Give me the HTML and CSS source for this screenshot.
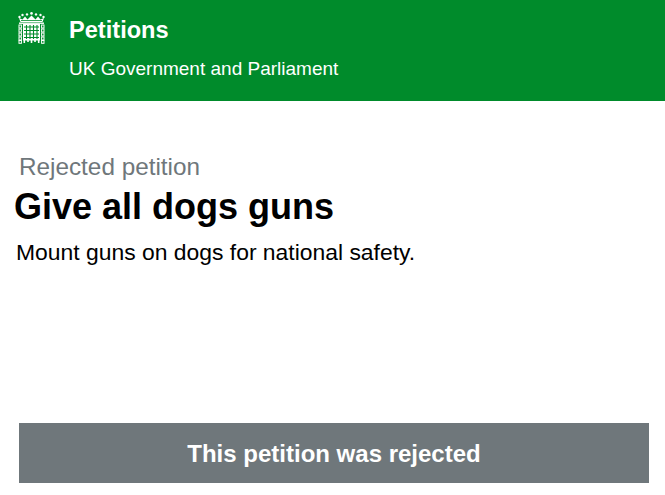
FILE: index.html
```html
<!DOCTYPE html>
<html lang="en">
<head>
<meta charset="utf-8">
<title>Rejected petition</title>
<link rel="stylesheet" href="styles.css">
</head>
<body>
<header class="site-header">
  <svg class="crest" width="27" height="32" viewBox="0 0 27 32" aria-hidden="true">
    <g fill="#fff">
      <circle cx="13.5" cy="1.4" r="1.3"/><circle cx="9" cy="2.4" r="1.2"/><circle cx="18" cy="2.4" r="1.2"/><circle cx="4.5" cy="3" r="1.2"/><circle cx="22.5" cy="3" r="1.2"/><circle cx="1.5" cy="5" r="1.2"/><circle cx="25.5" cy="5" r="1.2"/>
      <path d="M1 6l3.5 1.5L7 4.500l2.500 3 4-4 4 4 2.500-3 2.500 3L26 6l-1.500 4h-22z"/>
    </g>
    <rect x="3" y="8" width="21" height=".8" fill="#008b2b"/>
    <rect x="1" y="10.500" width="25" height="1.400" fill="#fff"/>
    <g fill="none" stroke="#fff" stroke-width="1">
      <rect x="1" y="13" width="2.400" height="3"/><rect x="1" y="17" width="2.400" height="3"/><rect x="1" y="21" width="2.400" height="3"/><rect x="1" y="25" width="2.400" height="3"/><rect x="1" y="28.500" width="2.400" height="2.800"/>
      <rect x="23.600" y="13" width="2.400" height="3"/><rect x="23.600" y="17" width="2.400" height="3"/><rect x="23.600" y="21" width="2.400" height="3"/><rect x="23.600" y="25" width="2.400" height="3"/><rect x="23.600" y="28.500" width="2.400" height="2.800"/>
    </g>
    <rect x="5" y="12" width="17" height="16.500" fill="#fff"/>
    <g fill="#fff">
      <rect x="5.500" y="28" width="1.600" height="3"/><rect x="9.200" y="28" width="1.600" height="2"/><rect x="12.700" y="28" width="1.600" height="3"/><rect x="16.200" y="28" width="1.600" height="2"/><rect x="19.900" y="28" width="1.600" height="3"/>
    </g>
    <g stroke="#008b2b" stroke-width="1.100">
      <path d="M6 15h15M6 18.500h15M6 22h15M6 25.500h15M8.500 13v14M12 13v14M15.500 13v14M19 13v14"/>
    </g>
  </svg>
  <div class="brand">
    <div class="brand-title">Petitions</div>
    <div class="brand-sub">UK Government and Parliament</div>
  </div>
</header>
<main class="content">
  <p class="status">Rejected petition</p>
  <h1 class="title">Give all dogs guns</h1>
  <p class="summary">Mount guns on dogs for national safety.</p>
  <div class="banner"><span class="banner-text">This petition was rejected</span></div>
</main>
</body>
</html>
```
FILE: styles.css
```css
html, body { margin: 0; padding: 0; }
body { font-family: "Liberation Sans", Arial, sans-serif; background: #fff; color: #000; width: 665px; height: 495px; overflow: hidden; }
.site-header { background: #008b2b; height: 101px; box-sizing: border-box; padding: 12px 0 0 18px; display: flex; gap: 24px; color: #fff; }
.crest { flex: none; }
.brand-title { font-size: 23.6px; font-weight: 700; line-height: 26px; margin-top: 5px; }
.brand-sub { font-size: 19px; line-height: 22px; margin-top: 15px; }
.content { display: flex; flex-direction: column; padding: 0 16px 0 19px; }
.status { margin: 53px 0 0; font-size: 24.300px; line-height: 26px; color: #6f777b; }
.title { margin: 6px 0 0 -5px; font-size: 36px; line-height: 42px; font-weight: 700; }
.summary { margin: 11px 0 0 -3px; font-size: 22.900px; line-height: 26px; }
.banner { margin-top: 158px; height: 60px; box-sizing: border-box; padding-top: 2px; background: #6f777b; color: #fff; font-size: 24px; font-weight: 700; display: flex; align-items: center; justify-content: center; }
```
